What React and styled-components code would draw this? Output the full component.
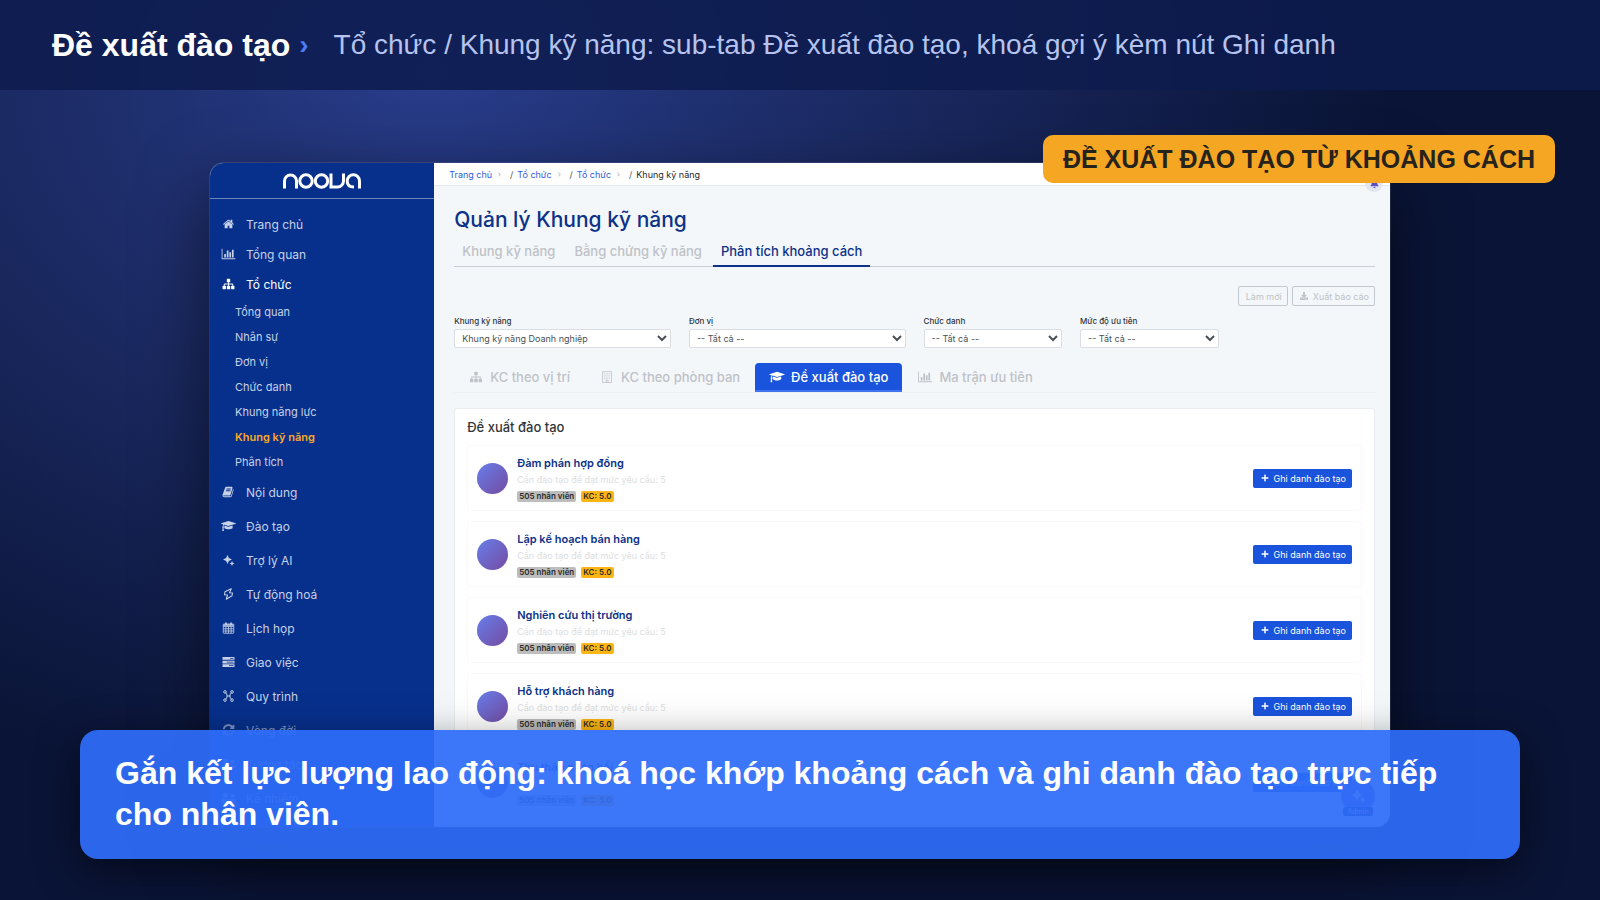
import React, { useState } from "react";
import styled, { createGlobalStyle, css } from "styled-components";
import { FaPlus, FaDownload, FaBell, FaSyncAlt, FaUserFriends, FaChevronRight } from "react-icons/fa";

/* ---------- icons ---------- */

const HomeIcon = () => (
  <svg viewBox="0 0 1792 1792" fill="currentColor">
    <path d="M1472 992v480q0 26-19 45t-45 19h-384v-384h-256v384h-384q-26 0-45-19t-19-45v-480q0-1 .5-3t.5-3l575-474 575 474q1 2 1 6zm223-69l-62 74q-8 9-21 11h-3q-13 0-21-7l-692-577-692 577q-12 8-24 7-13-2-21-11l-62-74q-8-10-7-23.5t11-21.5l719-599q32-26 76-26t76 26l244 204v-195q0-14 9-23t23-9h192q14 0 23 9t9 23v408l219 182q10 8 11 21.5t-7 23.5z" />
  </svg>
);

const ChartIcon = () => (
  <svg viewBox="0 0 2048 1792" fill="currentColor">
    <path d="M640 896v512h-256v-512h256zm384-512v1024h-256v-1024h256zm1024 1152v128h-2048v-1536h128v1408h1920zm-640-896v768h-256v-768h256zm384-384v1152h-256v-1152h256z" />
  </svg>
);

const SitemapIcon = () => (
  <svg viewBox="0 0 1792 1792" fill="currentColor">
    <path d="M1792 1248v320q0 40-28 68t-68 28h-320q-40 0-68-28t-28-68v-320q0-40 28-68t68-28h96v-192h-512v192h96q40 0 68 28t28 68v320q0 40-28 68t-68 28h-320q-40 0-68-28t-28-68v-320q0-40 28-68t68-28h96v-192h-512v192h96q40 0 68 28t28 68v320q0 40-28 68t-68 28h-320q-40 0-68-28t-28-68v-320q0-40 28-68t68-28h96v-192q0-52 38-90t90-38h512v-192h-96q-40 0-68-28t-28-68v-320q0-40 28-68t68-28h320q40 0 68 28t28 68v320q0 40-28 68t-68 28h-96v192h512q52 0 90 38t38 90v192h96q40 0 68 28t28 68z" />
  </svg>
);

const BookIcon = () => (
  <svg viewBox="0 0 1792 1792" fill="currentColor">
    <path d="M1639 478q40 57 18 129l-275 906q-19 64-76.5 107.5t-122.5 43.5h-923q-77 0-148.5-53.5t-99.5-131.5q-24-67-2-127 0-4 3-27t4-37q1-8-3-21.5t-3-19.5q2-11 8-21t16.5-23.5 16.5-23.5q23-38 45-91.5t30-91.5q3-10 .5-30t-.5-28q3-11 17-28t17-23q21-36 42-92t25-90q1-9-2.5-32t.5-28q4-13 22-30.5t22-22.5q19-26 42.5-84.5t27.5-96.5q1-8-3-25.5t-2-26.5q2-8 9-18t18-23 17-21q8-12 16.5-30.5t15-35 16-36 19.5-32 26.5-23.5 36-11.5 47.5 5.5l-1 3q38-9 51-9h761q74 0 114 56t18 130l-274 906q-36 119-71.5 153.5t-128.5 34.5h-869q-27 0-38 15-11 16-1 43 24 70 144 70h923q29 0 56-15.5t35-41.5l300-987q7-22 5-57 38 15 59 43zm-1064 2q-4 13 2 22.5t20 9.5h608q13 0 25.5-9.5t16.5-22.5l21-64q4-13-2-22.5t-20-9.5h-608q-13 0-25.5 9.5t-16.5 22.5zm-83 256q-4 13 2 22.5t20 9.5h608q13 0 25.5-9.5t16.5-22.5l21-64q4-13-2-22.5t-20-9.5h-608q-13 0-25.5 9.5t-16.5 22.5z" />
  </svg>
);

const CapIcon = () => (
  <svg viewBox="0 0 2304 1792" fill="currentColor">
    <path d="M1774 836l18 316q4 69-82 128t-235 93.5-323 34.5-323-34.5-235-93.5-82-128l18-316 574 181q22 7 48 7t48-7zm530-324q0 23-22 31l-1120 352q-4 1-10 1t-10-1l-652-206q-43 34-71 111.5t-34 178.5q63 36 63 109 0 69-58 107l58 433q2 14-8 25-9 11-24 11h-192q-15 0-24-11-10-11-8-25l58-433q-58-38-58-107 0-73 65-111 11-207 98-330l-333-104q-22-8-22-31t22-31l1120-352q4-1 10-1t10 1l1120 352q22 8 22 31z" />
  </svg>
);

const SparkIcon = () => (
  <svg viewBox="0 0 24 24" fill="currentColor">
    <path d="M10 2l2.800 6.200L19 11l-6.200 2.800L10 20l-2.800-6.200L1 11l6.200-2.800z" />
    <path d="M19 14l1.600 3.400L24 19l-3.400 1.600L19 24l-1.600-3.400L14 19l3.400-1.600z" />
  </svg>
);

const BoltIcon = () => (
  <svg viewBox="0 0 24 24" fill="none" stroke="currentColor" strokeWidth="2.2" strokeLinejoin="round">
    <path d="M17.500 1.500L5 7.500 4 13.500l6 .5-2.500 8.500L19 15.500l1-5.500-6-.5z" />
  </svg>
);

const CalendarIcon = () => (
  <svg viewBox="0 0 24 24" fill="none" stroke="currentColor" strokeWidth="1.6">
    <rect x="1.500" y="4" width="21" height="18.500" rx="1" />
    <path d="M1.500 9h21M1.500 13.500h21M1.500 18h21M6.700 9v13.500M12 9v13.500M17.300 9v13.500" />
    <path d="M7 1v5M17 1v5" strokeWidth="3.200" />
    <path d="M2 6h20" strokeWidth="3" />
  </svg>
);

const TasksIcon = () => (
  <svg viewBox="0 0 24 24" fill="currentColor" fillRule="evenodd">
    <path d="M0 2h24v5.500H0zM15 4v1.600h7V4z" />
    <path d="M0 9.300h24v5.500H0zM8.500 11.300v1.600H22v-1.600z" />
    <path d="M0 16.600h24v5.500H0zM13 18.600v1.600h9v-1.600z" />
  </svg>
);

const FlowIcon = () => (
  <svg viewBox="0 0 24 24" fill="none" stroke="currentColor" strokeWidth="2">
    <circle cx="5" cy="3.800" r="2.600" />
    <circle cx="19" cy="3.800" r="2.600" />
    <circle cx="5" cy="20.200" r="2.600" />
    <circle cx="19" cy="20.200" r="2.600" />
    <path d="M6 6q3 1 3 4v4q0 3-3 4M18 6q-3 1-3 4v4q0 3 3 4M9 12h6" />
  </svg>
);

const BuildingIcon = () => (
  <svg viewBox="0 0 24 24" fill="none" stroke="currentColor" strokeWidth="1.600">
    <path d="M3 1h18v22H3zM10 22.500V18h4v4.500" />
    <path d="M6.500 5h11M6.500 8.500h11M6.500 12h11M6.500 15.500h11" strokeDasharray="2 2.500" strokeWidth="2" />
  </svg>
);

const NoovaLogo = () => (
  <svg width="78" height="16" viewBox="0 0 78 16" fill="none" stroke="#fff" strokeWidth="3">
    <path d="M1.500 15.500V8a6 6 0 0 1 12 0v7.500" />
    <circle cx="23" cy="8" r="6.200" />
    <circle cx="38.500" cy="8" r="6.200" />
    <path d="M48 .500V14h6.500a6 6 0 0 0 6-6V.500" />
    <path d="M76.500 15.500V8a6 6 0 0 0-12.300 0q0 6 6.800 6" />
  </svg>
);

/* ---------- data ---------- */

const mainMenu = [
  { label: "Trang chủ", icon: HomeIcon },
  { label: "Tổng quan", icon: ChartIcon },
  { label: "Tổ chức", icon: SitemapIcon, active: true },
];

const subMenu = ["Tổng quan", "Nhân sự", "Đơn vị", "Chức danh", "Khung năng lực", "Khung kỹ năng", "Phân tích"];

const moreMenu = [
  { label: "Nội dung", icon: BookIcon },
  { label: "Đào tạo", icon: CapIcon },
  { label: "Trợ lý AI", icon: SparkIcon },
  { label: "Tự động hoá", icon: BoltIcon },
  { label: "Lịch họp", icon: CalendarIcon },
  { label: "Giao việc", icon: TasksIcon },
  { label: "Quy trình", icon: FlowIcon },
  { label: "Vòng đời", icon: FaSyncAlt, dim: true },
  { label: "Tương tác", icon: FaUserFriends, dim: true },
  { label: "Kế nhiệm", icon: FaUserFriends, dim: true },
];

const pageTabs = ["Khung kỹ năng", "Bằng chứng kỹ năng", "Phân tích khoảng cách"];

const filters = [
  { id: "framework", label: "Khung kỹ năng", value: "Khung kỹ năng Doanh nghiệp", span: 3 },
  { id: "unit", label: "Đơn vị", value: "-- Tất cả --", span: 3 },
  { id: "position", label: "Chức danh", value: "-- Tất cả --", span: 2 },
  { id: "priority", label: "Mức độ ưu tiên", value: "-- Tất cả --", span: 2 },
];

const gapTabs = [
  { label: "KC theo vị trí", icon: SitemapIcon },
  { label: "KC theo phòng ban", icon: BuildingIcon },
  { label: "Đề xuất đào tạo", icon: CapIcon },
  { label: "Ma trận ưu tiên", icon: ChartIcon },
];

const courses = [
  "Đàm phán hợp đồng",
  "Lập kế hoạch bán hàng",
  "Nghiên cứu thị trường",
  "Hỗ trợ khách hàng",
  "Thu thập phản hồi",
];

/* ---------- page ---------- */

const App = () => {
  const [pageTab, setPageTab] = useState(2);
  const [gapTab, setGapTab] = useState(2);

  return (
    <Stage>
      <GlobalStyle />
      <TopBar>
        <TopTitle>Đề xuất đào tạo</TopTitle>
        <TopArrow>›</TopArrow>
        <TopText>Tổ chức / Khung kỹ năng: sub-tab Đề xuất đào tạo, khoá gợi ý kèm nút Ghi danh</TopText>
      </TopBar>

      <Scene>
        <AppWindow>
          <Sidebar>
            <LogoBox>
              <NoovaLogo />
            </LogoBox>
            <Menu>
              {mainMenu.map(({ label, icon: Icon, active }) => (
                <MenuLink href="#" key={label} $active={active}>
                  <Icon />
                  {label}
                </MenuLink>
              ))}
              <SubMenu>
                {subMenu.map((label) => (
                  <SubLink href="#" key={label} $active={label === "Khung kỹ năng"}>
                    {label}
                  </SubLink>
                ))}
              </SubMenu>
              {moreMenu.map(({ label, icon: Icon, dim }) => (
                <MenuLink href="#" key={label} $tall $dim={dim}>
                  <Icon />
                  {label}
                </MenuLink>
              ))}
            </Menu>
          </Sidebar>

          <Content>
            <Breadcrumb>
              {["Trang chủ", "Tổ chức", "Tổ chức"].map((label, i) => (
                <Crumb key={i}>
                  <a href="#">{label}</a>
                  <FaChevronRight />
                  <span>/</span>
                </Crumb>
              ))}
              <CrumbNow>Khung kỹ năng</CrumbNow>
              <BellButton aria-label="Thông báo">
                <FaBell />
              </BellButton>
            </Breadcrumb>

            <Page>
              <PageTitle>Quản lý Khung kỹ năng</PageTitle>
              <PageTabs>
                {pageTabs.map((label, i) => (
                  <PageTab key={label} $active={i === pageTab} onClick={() => setPageTab(i)}>
                    {label}
                  </PageTab>
                ))}
              </PageTabs>

              <Actions>
                <GhostButton>Làm mới</GhostButton>
                <GhostButton>
                  <FaDownload />
                  Xuất báo cáo
                </GhostButton>
              </Actions>

              <Filters>
                {filters.map(({ id, label, value, span }) => (
                  <Field key={id} $span={span}>
                    <label htmlFor={id}>{label}</label>
                    <select id={id}>
                      <option>{value}</option>
                    </select>
                  </Field>
                ))}
              </Filters>

              <GapTabs>
                {gapTabs.map(({ label, icon: Icon }, i) => (
                  <GapTab key={label} $active={i === gapTab} onClick={() => setGapTab(i)}>
                    <Icon />
                    {label}
                  </GapTab>
                ))}
              </GapTabs>

              <Card>
                <CardTitle>Đề xuất đào tạo</CardTitle>
                {courses.map((name) => (
                  <CourseRow key={name}>
                    <Avatar />
                    <CourseInfo>
                      <CourseName>{name}</CourseName>
                      <CourseNote>Cần đào tạo để đạt mức yêu cầu: 5</CourseNote>
                      <Tags>
                        <Tag>505 nhân viên</Tag>
                        <Tag $warn>KC: 5.0</Tag>
                      </Tags>
                    </CourseInfo>
                    <EnrollButton>
                      <FaPlus />
                      Ghi danh đào tạo
                    </EnrollButton>
                  </CourseRow>
                ))}
              </Card>
            </Page>
          </Content>

          <Assistant>
            <AssistantButton aria-label="Trợ lý AI">
              <SparkIcon />
            </AssistantButton>
            <AssistantLabel>Admin</AssistantLabel>
          </Assistant>
        </AppWindow>
      </Scene>

      <Callout>ĐỀ XUẤT ĐÀO TẠO TỪ KHOẢNG CÁCH</Callout>
      <Caption>
        Gắn kết lực lượng lao động: khoá học khớp khoảng cách và ghi danh đào tạo trực tiếp cho nhân viên.
      </Caption>
    </Stage>
  );
};

/* ---------- styles ---------- */

const GlobalStyle = createGlobalStyle`
  * { box-sizing: border-box; }
  body {
    margin: 0;
    background: #0a1333;
    font-family: Inter, "Noto Sans", sans-serif;
  }
  button, select { font-family: inherit; }
  a { text-decoration: none; }
`;

const Stage = styled.div`
  position: relative;
  display: flex;
  flex-direction: column;
  min-height: 100vh;
  overflow: hidden;
  background: radial-gradient(ellipse 60% 82% at 27% 8%, #283c8a 0%, #1b2a63 45%, #0a1436 100%);
`;

const TopBar = styled.header`
  display: flex;
  align-items: center;
  min-height: 90px;
  padding: 0 52px;
  font-family: "Liberation Sans", Arial, sans-serif;
  background: rgba(13, 27, 78, 0.85);
`;

const TopTitle = styled.h1`
  margin: 0;
  font-size: 32px;
  font-weight: 700;
  color: #fff;
`;

const TopArrow = styled.span`
  margin: 0 25px 0 9px;
  font-size: 28px;
  font-weight: 700;
  color: #4e7bf5;
`;

const TopText = styled.p`
  margin: 0;
  font-size: 28px;
  color: #b5c3ee;
`;

const Scene = styled.main`
  flex: 1;
  padding: 73px 210px;
`;

const AppWindow = styled.div`
  position: relative;
  display: flex;
  aspect-ratio: 16 / 9;
  border-radius: 14px;
  overflow: hidden;
  background: #f3f7fa;
  box-shadow: 0 0 0 1px rgba(255, 255, 255, 0.1), 0 24px 70px rgba(0, 0, 0, 0.55);
`;

const Sidebar = styled.nav`
  flex: 0 0 19%;
  background: #07308c;
`;

const LogoBox = styled.div`
  display: flex;
  align-items: center;
  justify-content: center;
  height: 36px;
  border-bottom: 1px solid #6d87bd;
`;

const Menu = styled.div`
  display: flex;
  flex-direction: column;
  padding-top: 10px;
`;

const MenuLink = styled.a`
  display: flex;
  align-items: center;
  flex: none;
  gap: 10px;
  height: ${(props) => (props.$tall ? 34 : 30)}px;
  padding-left: 11px;
  font-size: 12px;
  color: ${(props) => (props.$active ? "#fff" : props.$dim ? "#7f95c6" : "#c6d0e6")};

  svg {
    width: 15px;
    height: 12px;
  }
`;

const SubMenu = styled.div`
  display: flex;
  flex-direction: column;
  padding-top: 1px;
`;

const SubLink = styled.a`
  padding-left: 25px;
  font-size: 11px;
  line-height: 25px;
  font-weight: ${(props) => (props.$active ? 600 : 400)};
  color: ${(props) => (props.$active ? "#f9a826" : "#c6d0e6")};
`;

const Content = styled.section`
  flex: 1;
  min-width: 0;
`;

const Breadcrumb = styled.div`
  position: relative;
  display: flex;
  align-items: center;
  height: 23px;
  padding-left: 15px;
  font-size: 9px;
  background: #fff;
  border-bottom: 1px solid #e3e8ee;
`;

const Crumb = styled.span`
  display: flex;
  align-items: center;
  color: #555;

  a { color: #2c5bdc; }

  svg {
    width: 5px;
    height: 5px;
    margin: 0 8px 0 5px;
    color: #b8bcc4;
  }

  span { margin-right: 4px; }
`;

const CrumbNow = styled.span`
  color: #26292e;
`;

const BellButton = styled.button`
  position: absolute;
  top: 11px;
  right: 7px;
  display: flex;
  align-items: center;
  justify-content: center;
  width: 18px;
  height: 18px;
  padding: 0;
  border: 0;
  border-radius: 50%;
  color: #5a4fc4;
  background: #e2e4f0;

  svg { width: 9px; height: 9px; }
`;

const Page = styled.div`
  padding: 21px 15px 0 20px;
`;

const PageTitle = styled.h2`
  margin: 0;
  font-size: 21px;
  line-height: 26px;
  font-weight: 500;
  color: #0d3288;
`;

const PageTabs = styled.div`
  display: flex;
  gap: 3px;
  margin-top: 3px;
  border-bottom: 1px solid #c9ced6;
`;

const PageTab = styled.button`
  height: 31px;
  margin-bottom: -1px;
  padding: 0 8px;
  border: 0;
  border-bottom: 2px solid ${(props) => (props.$active ? "#0d3288" : "transparent")};
  background: none;
  font-size: 13px;
  font-weight: 500;
  color: ${(props) => (props.$active ? "#0d3288" : "#bfc2c7")};
`;

const Actions = styled.div`
  display: flex;
  justify-content: flex-end;
  gap: 4px;
  margin-top: 19px;
`;

const smallButton = css`
  display: flex;
  align-items: center;
  gap: 5px;
  border-radius: 2px;
  font-size: 9px;
`;

const GhostButton = styled.button`
  ${smallButton}
  height: 20px;
  padding: 0 5px 0 7px;
  border: 1px solid #c4c8ce;
  background: transparent;
  color: #bfc2c7;

  svg { width: 8px; height: 8px; }
`;

const Filters = styled.div`
  display: grid;
  grid-template-columns: repeat(12, 1fr);
  column-gap: 18px;
  margin-top: 10px;
`;

const Field = styled.div`
  grid-column: span ${(props) => props.$span};
  display: flex;
  flex-direction: column;

  label {
    font-size: 8px;
    line-height: 10px;
    font-weight: 500;
    color: #2f343a;
  }

  select {
    height: 19px;
    margin-top: 3px;
    padding: 0 0 0 3px;
    border: 1px solid #dadde2;
    border-radius: 2px;
    background-color: #fff;
    font-size: 9px;
    color: #4a5056;
  }
`;

const GapTabs = styled.div`
  display: flex;
  gap: 1px;
  margin-top: 15px;
  border-bottom: 1px solid #eef1f4;
`;

const GapTab = styled.button`
  display: flex;
  align-items: center;
  gap: 6px;
  height: 29px;
  padding: 0 14px;
  border: 0;
  border-bottom: 2px solid ${(props) => (props.$active ? "#3f74ee" : "transparent")};
  border-radius: 4px 4px 0 0;
  background: ${(props) => (props.$active ? "#1a53dc" : "none")};
  font-size: 13px;
  font-weight: 500;
  color: ${(props) => (props.$active ? "#fff" : "#bfc2c7")};

  svg {
    width: 16px;
    height: 12px;
  }
`;

const Card = styled.div`
  display: flex;
  flex-direction: column;
  gap: 10px;
  margin-top: 15px;
  padding: 10px 12px;
  border: 1px solid #e9ecf0;
  border-radius: 3px;
  background: #fff;
`;

const CardTitle = styled.h3`
  margin: 0;
  font-size: 13px;
  line-height: 16px;
  font-weight: 500;
  color: #33373c;
`;

const CourseRow = styled.article`
  display: flex;
  align-items: center;
  gap: 9px;
  height: 66px;
  padding: 0 9px;
  border: 1px solid #f8f9fa;
  border-radius: 4px;
`;

const Avatar = styled.div`
  width: 31px;
  height: 31px;
  border-radius: 50%;
  background: linear-gradient(135deg, #667eea 0%, #764ba2 100%);
`;

const CourseInfo = styled.div`
  flex: 1;
`;

const CourseName = styled.h4`
  margin: 0;
  font-size: 11px;
  line-height: 16px;
  font-weight: 600;
  color: #0d3288;
`;

const CourseNote = styled.p`
  margin: 3px 0 5px;
  font-size: 9px;
  line-height: 12px;
  color: #dcdee1;
`;

const Tags = styled.div`
  display: flex;
  gap: 5px;
`;

const Tag = styled.span`
  padding: 0 2px;
  border-radius: 2px;
  font-size: 8px;
  line-height: 11px;
  font-weight: 600;
  color: #2a2a2a;
  background: ${(props) => (props.$warn ? "#fdb515" : "#bdbdbd")};
`;

const EnrollButton = styled.button`
  ${smallButton}
  height: 19px;
  padding: 0 6px 0 8px;
  border: 0;
  background: #1a53dc;
  color: #fff;

  svg { width: 8px; height: 8px; }
`;

const Assistant = styled.div`
  position: absolute;
  right: 15px;
  bottom: 11px;
  display: flex;
  flex-direction: column;
  align-items: center;
`;

const AssistantButton = styled.button`
  display: flex;
  align-items: center;
  justify-content: center;
  width: 34px;
  height: 34px;
  margin-bottom: -6px;
  padding: 0;
  border: 0;
  border-radius: 50%;
  color: #fff;
  background: #6a5cc8;

  svg { width: 15px; height: 15px; }
`;

const AssistantLabel = styled.span`
  padding: 0 4px;
  border-radius: 2px;
  font-size: 7px;
  line-height: 9px;
  color: #fff;
  background: #0b2f86;
`;

const Callout = styled.div`
  position: absolute;
  top: 135px;
  right: 45px;
  padding: 0 20px;
  border-radius: 10px;
  font-family: "Liberation Sans", Arial, sans-serif;
  font-size: 25px;
  line-height: 48px;
  font-weight: 700;
  color: #26221c;
  background: #f5a623;
`;

const Caption = styled.div`
  position: absolute;
  left: 80px;
  right: 80px;
  bottom: 41px;
  padding: 23px 35px 24px;
  border-radius: 18px;
  font-family: "Liberation Sans", Arial, sans-serif;
  font-size: 32px;
  line-height: 41px;
  font-weight: 700;
  color: #fff;
  background: rgba(46, 109, 249, 0.93);
  box-shadow: 0 12px 40px rgba(0, 0, 0, 0.5);
`;

export default App;
